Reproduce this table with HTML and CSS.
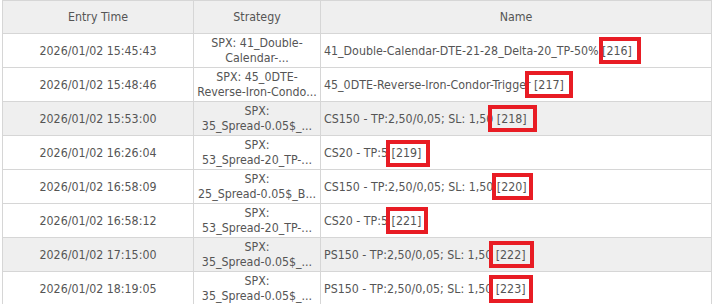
FILE: index.html
```html
<!DOCTYPE html>
<html lang="en">
<head>
<meta charset="utf-8">
<title>Trades</title>
<link rel="stylesheet" href="styles.css">
</head>
<body>
<div class="wrap">
<table class="grid">
  <thead>
    <tr class="head-row">
      <th class="col-time">Entry Time</th>
      <th class="col-strategy">Strategy</th>
      <th class="col-name">Name</th>
    </tr>
  </thead>
  <tbody>
    <tr>
      <td class="c-time">2026/01/02 15:45:43</td>
      <td class="c-strategy">SPX: 41_Double-<br>Calendar-...</td>
      <td class="c-name">41_Double-Calendar-DTE-21-28_Delta-20_TP-50% <span class="tag m216">[216]</span></td>
    </tr>
    <tr>
      <td class="c-time">2026/01/02 15:48:46</td>
      <td class="c-strategy">SPX: 45_0DTE-<br>Reverse-Iron-Condo...</td>
      <td class="c-name">45_0DTE-Reverse-Iron-Condor-Trigger <span class="tag m217">[217]</span></td>
    </tr>
    <tr class="shaded">
      <td class="c-time">2026/01/02 15:53:00</td>
      <td class="c-strategy">SPX:<br>35_Spread-0.05$_...</td>
      <td class="c-name">CS150 - TP:2,50/0,05; SL: 1,50 <span class="tag m218">[218]</span></td>
    </tr>
    <tr>
      <td class="c-time">2026/01/02 16:26:04</td>
      <td class="c-strategy">SPX:<br>53_Spread-20_TP-...</td>
      <td class="c-name">CS20 - TP:5 <span class="tag m219">[219]</span></td>
    </tr>
    <tr>
      <td class="c-time">2026/01/02 16:58:09</td>
      <td class="c-strategy">SPX:<br>25_Spread-0.05$_B...</td>
      <td class="c-name">CS150 - TP:2,50/0,05; SL: 1,50 <span class="tag m220">[220]</span></td>
    </tr>
    <tr>
      <td class="c-time">2026/01/02 16:58:12</td>
      <td class="c-strategy">SPX:<br>53_Spread-20_TP-...</td>
      <td class="c-name">CS20 - TP:5 <span class="tag m221">[221]</span></td>
    </tr>
    <tr class="shaded">
      <td class="c-time">2026/01/02 17:15:00</td>
      <td class="c-strategy">SPX:<br>35_Spread-0.05$_...</td>
      <td class="c-name">PS150 - TP:2,50/0,05; SL: 1,50 <span class="tag m222">[222]</span></td>
    </tr>
    <tr>
      <td class="c-time">2026/01/02 18:19:05</td>
      <td class="c-strategy">SPX:<br>35_Spread-0.05$_...</td>
      <td class="c-name">PS150 - TP:2,50/0,05; SL: 1,50 <span class="tag m223">[223]</span></td>
    </tr>
  </tbody>
</table>
</div>
</body>
</html>
```

FILE: styles.css
```css
html, body {
  margin: 0;
  padding: 0;
  background: #ffffff;
}

.wrap {
  padding: 0 0 0 2px;
  overflow: hidden;
  height: 304px;
}

.grid {
  border-collapse: separate;
  border-spacing: 0;
  table-layout: fixed;
  width: 710px;
  border-top: 1px solid #d6d6d6;
  border-left: 1px solid #d6d6d6;
  font-family: "DejaVu Sans Condensed", "DejaVu Sans", sans-serif;
  font-stretch: condensed;
  font-size: 12.3px;
  color: #555555;
}

.grid th,
.grid td {
  box-sizing: border-box;
  border-right: 1px solid #d6d6d6;
  border-bottom: 1px solid #d6d6d6;
  padding: 0 3px;
  vertical-align: middle;
  font-weight: normal;
  overflow: hidden;
  white-space: nowrap;
}

.col-time { width: 191px; }
.col-strategy { width: 127px; }
.col-name { width: 391px; }

.head-row {
  height: 33px;
  background: #efefef;
}

.head-row th {
  text-align: center;
}

tbody tr {
  height: 34px;
}

tbody tr.shaded {
  background: #efefef;
}

.c-time {
  text-align: center;
}

.grid td.c-strategy {
  text-align: center;
  line-height: 15px;
  padding: 0;
}

.c-name {
  text-align: left;
}

.tag {
  position: relative;
}

.tag::after {
  content: "";
  position: absolute;
  top: -7px;
  bottom: -6px;
  left: -7px;
  right: -8px;
  border: 4px solid #e81c24;
}

.m216::after { left: -3px; right: -9px; }
.m217::after { left: -9px; right: -9px; }
.m218::after { left: -9px; right: -10px; }
.m219::after { left: -6px; right: -9px; top: -6px; bottom: -7px; }
.m220::after { left: -5px; right: -6px; }
.m221::after { left: -6px; right: -7px; }
.m222::after { left: -7px; right: -8px; }
.m223::after { left: -7px; right: -7px; bottom: -7px; }
```
